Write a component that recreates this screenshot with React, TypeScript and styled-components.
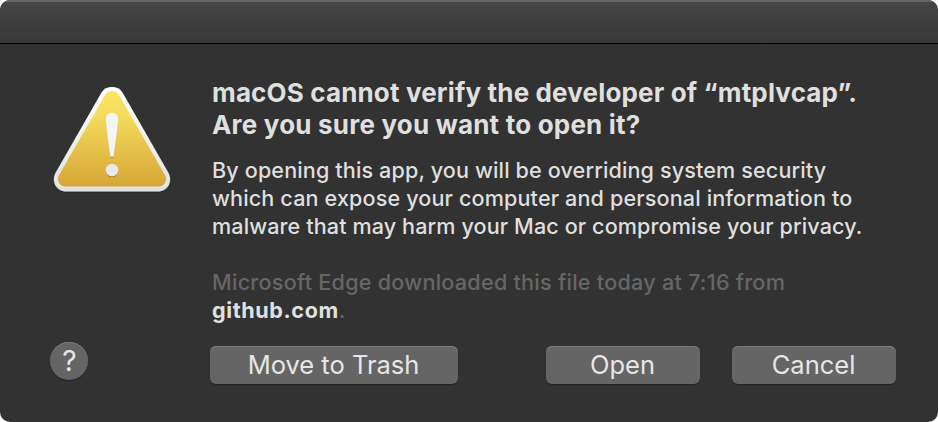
import React from "react";
import styled, { createGlobalStyle } from "styled-components";

const GlobalStyle = createGlobalStyle`
  * { box-sizing: border-box; }
  html, body { margin: 0; background: #fff; overflow: hidden; }
`;

const Dialog = styled.main`
  width: 938px;
  height: 422px;
  display: flex;
  flex-direction: column;
  overflow: hidden;
  border-radius: 10px;
  background: #323232;
  color: #dfdfdf;
  font-family: Inter, "Liberation Sans", sans-serif;
  -webkit-font-smoothing: antialiased;
`;

const TitleBar = styled.header`
  flex: 0 0 44px;
  border-top: 2px solid #666;
  border-bottom: 1px solid #000;
  background: linear-gradient(#454545, #383838);
`;

const Content = styled.div`
  flex: 1;
  display: grid;
  grid-template-columns: 160px 1fr;
  grid-template-rows: 302px 1fr;
  padding-left: 50px;
`;

const IconCell = styled.div`
  padding-top: 39px;
`;

const Message = styled.div`
  padding: 33px 0 0 2px;
  white-space: nowrap;
`;

const Line = styled.span<{ $spacing: number }>`
  display: block;
  letter-spacing: ${(p) => p.$spacing}px;
`;

const Heading = styled.h1`
  margin: 0;
  font-size: 26px;
  font-weight: 700;
  line-height: 32px;
`;

const Paragraph = styled.p<{ $muted?: boolean }>`
  margin: ${(p) => (p.$muted ? 28 : 15)}px 0 0;
  font-size: 21.6px;
  font-weight: 450;
  line-height: 28px;
  color: ${(p) => (p.$muted ? "#666" : "#dfdfdf")};
`;

const Source = styled.strong`
  color: #e0e0e0;
  font-weight: 700;
`;

const HelpCell = styled.div`
  margin-top: -4px;
`;

const HelpButton = styled.button`
  display: block;
  width: 38px;
  height: 38px;
  padding: 0 0 0 1px;
  border: 0;
  border-radius: 50%;
  background: #656565;
  color: #e6e6e6;
  font: 400 28px/38px Inter, sans-serif;
  text-align: center;
  box-shadow: inset 0 1px 0 #7a7a7a, 0 1px 1px #222;
`;

const Actions = styled.div`
  display: flex;
  align-items: flex-start;
`;

const PushButton = styled.button<{ $width: number; $gap?: number }>`
  width: ${(p) => p.$width}px;
  height: 38px;
  margin: 0 0 0 ${(p) => p.$gap ?? 0}px;
  padding: 0 1px 0 0;
  border: 0;
  border-radius: 6px;
  background: #656565;
  color: #e6e6e6;
  font: 400 25.5px/38px Inter, sans-serif;
  text-align: center;
  box-shadow: inset 0 1px 0 #7d7d7d, 0 1px 1px #222;
`;

const Warning = styled.svg`
  display: block;
  width: 124px;
  height: 112px;
`;

function WarningIcon() {
  return (
    <Warning viewBox="50 83 124 112" aria-label="Warning">
      <defs>
        <linearGradient id="rim" x1="0" y1="0" x2="0" y2="1">
          <stop offset="0" stopColor="#fff" />
          <stop offset="1" stopColor="#e2e2e2" />
        </linearGradient>
        <linearGradient id="face" x1="0" y1="0" x2="0" y2="1">
          <stop offset="0" stopColor="#fae563" />
          <stop offset="0.25" stopColor="#f4dc5c" />
          <stop offset="1" stopColor="#d6a637" />
        </linearGradient>
        <filter id="shade" x="-20%" y="-20%" width="140%" height="140%">
          <feDropShadow dx="0" dy="0.8" stdDeviation="0.7" floodColor="#000" floodOpacity="0.4" />
        </filter>
      </defs>
      <path
        filter="url(#shade)"
        fill="url(#rim)"
        d="M101.5 92.5C106 85.2 118 85.2 122.5 92.5L168.3 172.5C173.3 181.5 167.5 191.5 158 191.5H66C56.5 191.5 50.7 181.5 55.7 172.5Z"
      />
      <path
        fill="url(#face)"
        d="M105 95C108.2 89.6 115.8 89.6 119 95L165 175C168 180.5 164.5 186.5 158.5 186.5H65.5C59.5 186.5 56 180.5 59 175Z"
      />
      <g filter="url(#shade)">
        <path fill="#f6f6f6" d="M105.8 119C105.8 110.8 118.2 110.8 118.2 119C118.2 124 115.5 143 113.8 155.5C113.6 157.3 110.4 157.3 110.2 155.5C108.5 143 105.8 124 105.8 119Z" />
        <circle cx="112" cy="170" r="6.2" fill="#e9e9e9" />
      </g>
    </Warning>
  );
}

export default function App() {
  return (
    <>
      <GlobalStyle />
      <Dialog role="alertdialog">
        <TitleBar />
        <Content>
          <IconCell><WarningIcon /></IconCell>
          <Message>
            <Heading>
              <Line $spacing={0.15}>macOS cannot verify the developer of “mtplvcap”.</Line>
              <Line $spacing={0.2}>Are you sure you want to open it?</Line>
            </Heading>
            <Paragraph>
              <Line $spacing={0.12}>By opening this app, you will be overriding system security</Line>
              <Line $spacing={0.13}>which can expose your computer and personal information to</Line>
              <Line $spacing={0.1}>malware that may harm your Mac or compromise your privacy.</Line>
            </Paragraph>
            <Paragraph $muted>
              <Line $spacing={0.25}>Microsoft Edge downloaded this file today at 7:16 from</Line>
              <Line $spacing={0.6}><Source>github.com</Source>.</Line>
            </Paragraph>
          </Message>
          <HelpCell><HelpButton aria-label="Help">?</HelpButton></HelpCell>
          <Actions>
            <PushButton $width={248}>Move to Trash</PushButton>
            <PushButton $width={154} $gap={88}>Open</PushButton>
            <PushButton $width={164} $gap={32}>Cancel</PushButton>
          </Actions>
        </Content>
      </Dialog>
    </>
  );
}
